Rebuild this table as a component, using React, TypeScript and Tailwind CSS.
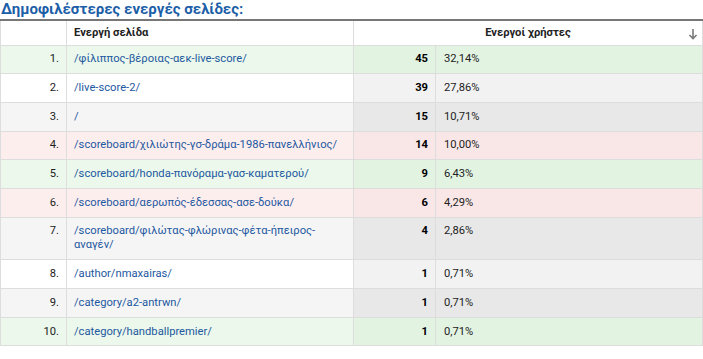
import React from 'react';

type Row = { page: string; users: number; pct: string; tone: 'green' | 'white' | 'gray' | 'pink' };

const rows: Row[] = [
  { page: '/φίλιππος-βέροιας-αεκ-live-score/', users: 45, pct: '32,14%', tone: 'green' },
  { page: '/live-score-2/', users: 39, pct: '27,86%', tone: 'white' },
  { page: '/', users: 15, pct: '10,71%', tone: 'gray' },
  { page: '/scoreboard/χιλιώτης-γσ-δράμα-1986-πανελλήνιος/', users: 14, pct: '10,00%', tone: 'pink' },
  { page: '/scoreboard/honda-πανόραμα-γασ-καματερού/', users: 9, pct: '6,43%', tone: 'green' },
  { page: '/scoreboard/αερωπός-έδεσσας-ασε-δούκα/', users: 6, pct: '4,29%', tone: 'pink' },
  { page: '/scoreboard/φιλώτας-φλώρινας-φέτα-ήπειρος-αναγέν/', users: 4, pct: '2,86%', tone: 'gray' },
  { page: '/author/nmaxairas/', users: 1, pct: '0,71%', tone: 'white' },
  { page: '/category/a2-antrwn/', users: 1, pct: '0,71%', tone: 'gray' },
  { page: '/category/handballpremier/', users: 1, pct: '0,71%', tone: 'green' },
];

const baseBg = {
  green: 'bg-[#ebf8eb]',
  white: 'bg-white',
  gray: 'bg-[#f5f5f5]',
  pink: 'bg-[#fdeeee]',
};

const metricBg = {
  green: 'bg-[#e2f3e2]',
  white: 'bg-[#f2f2f2]',
  gray: 'bg-[#e8e8e8]',
  pink: 'bg-[#f9e7e7]',
};

function SortArrow() {
  return (
    <svg width="10" height="12" viewBox="0 0 10 12" className="block">
      <path d="M5 1 V10.5 M1.5 7 L5 10.5 L8.5 7" fill="none" stroke="#7a7a7a" strokeWidth="1.6" />
    </svg>
  );
}

export default function App() {
  return (
    <div className="w-[703px] h-[359px] bg-white text-[11.2px] text-[#222]" style={{ fontFamily: 'Roboto, "Liberation Sans", sans-serif' }}>
      <h2 className="text-[15px] leading-[19px] font-bold text-[#1b5ea7] pl-[1px]">
        Δημοφιλέστερες ενεργές σελίδες:
      </h2>
      <table className="w-full border-collapse border-t-2 border-t-[#777] table-fixed">
        <colgroup>
          <col className="w-[66px]" />
          <col className="w-[287px]" />
          <col className="w-[82px]" />
          <col />
        </colgroup>
        <thead>
          <tr className="bg-white">
            <th className="border border-[#ddd] border-t-0 h-[25px] p-0" />
            <th className="border border-[#ddd] border-t-0 text-left font-bold pl-[7px] py-0 leading-[14px]">Ενεργή σελίδα</th>
            <th colSpan={2} className="border border-[#ddd] border-t-0 font-bold leading-[14px] py-0 relative">
              Ενεργοί χρήστες
              <span className="absolute right-[4px] top-[7px]"><SortArrow /></span>
            </th>
          </tr>
        </thead>
        <tbody>
          {rows.map((r, i) => (
            <tr key={i}>
              <td className={`${baseBg[r.tone]} border border-[#ddd] text-right pr-[7px] py-[6.85px] leading-[14px] align-top`}>{i + 1}.</td>
              <td className={`${baseBg[r.tone]} border border-[#ddd] pl-[7px] pr-[7px] py-[6.85px] leading-[14px] align-top text-[#1d58a0]`}>{r.page}</td>
              <td className={`${metricBg[r.tone]} border border-[#ddd] text-right pr-[7px] py-[6.85px] leading-[14px] align-top font-bold text-black`}>{r.users}</td>
              <td className={`${metricBg[r.tone]} border border-[#ddd] pl-[8px] py-[6.85px] leading-[14px] align-top`}>{r.pct}</td>
            </tr>
          ))}
        </tbody>
      </table>
    </div>
  );
}
